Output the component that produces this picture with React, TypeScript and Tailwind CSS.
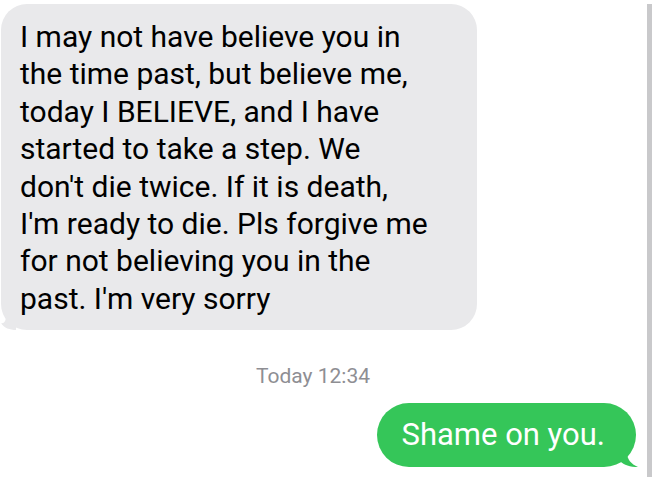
const incoming = [
  "I may not have believe you in",
  "the time past, but believe me,",
  "today I BELIEVE, and I have",
  "started to take a step. We",
  "don't die twice. If it is death,",
  "I'm ready to die. Pls forgive me",
  "for not believing you in the",
  "past. I'm very sorry",
];

const font = { fontFamily: "Roboto, 'Noto Sans', sans-serif" };

export default function App() {
  return (
    <div className="relative h-[487px] w-[665px] overflow-hidden bg-white" style={font}>
      {/* scroll indicator */}
      <div className="absolute left-[647px] top-[4px] h-[473px] w-[5px] bg-[#c9c9cb]" />

      <div className="flex flex-col">
        <div className="relative ml-[1px] mt-[4px] w-[476px]">
          <div className="rounded-[26px] bg-[#e9e9eb] pb-[13px] pl-[19px] pr-[20px] pt-[14px] text-[30px] leading-[37.4px] text-black">
            {incoming.map((line) => (
              <div key={line} className="whitespace-nowrap">
                {line}
              </div>
            ))}
          </div>
          <svg className="absolute bottom-0 left-[-1px]" width="16" height="18" viewBox="0 0 16 18">
            <path d="M16 0 L16 18 C10 18 4 16 1 11 C4 12 6 9 6 4 L6 0 Z" fill="#e9e9eb" />
          </svg>
        </div>

        <div className="mt-[34px] pl-[256px] text-[21px] leading-[24px] text-[#8e8e93]">Today 12:34</div>

        <div className="mt-[15px] flex justify-end pr-[29px]">
          <div className="relative">
            <div className="flex h-[64px] items-center rounded-[32px] bg-[#35c659] pl-[24px] pr-[31px] text-[31px] text-white">
              Shame on you.
            </div>
            <svg className="absolute bottom-0 right-[-3px]" width="22" height="20" viewBox="0 0 22 20">
              <path d="M0 0 L10 0 L10 6 C10 12 14 17 21 20 C13 20 7 18 3 14 L0 14 Z" fill="#35c659" />
            </svg>
          </div>
        </div>
      </div>
    </div>
  );
}
